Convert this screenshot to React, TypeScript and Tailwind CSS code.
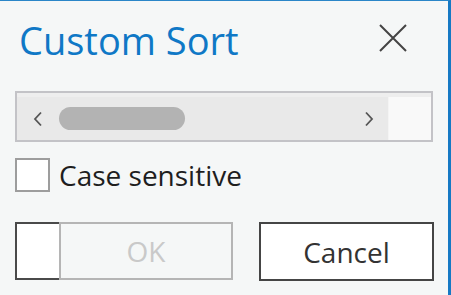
import React from 'react';

const font = { fontFamily: '"Open Sans", "Noto Sans", sans-serif' };

function Chevron({ dir }: { dir: 'left' | 'right' }) {
  return (
    <svg width="12" height="16" viewBox="0 0 12 16" className="shrink-0">
      <path
        d={dir === 'left' ? 'M9 1.5 L3 8 L9 14.5' : 'M3 1.5 L9 8 L3 14.5'}
        fill="none"
        stroke="#555"
        strokeWidth="1.8"
      />
    </svg>
  );
}

export default function App() {
  return (
    <div
      className="w-[451px] h-[295px] bg-[#f5f7f7] border-t border-t-[#2a86c8] border-r-[3px] border-r-[#1679c4] overflow-hidden pl-[15px] pr-[14px]"
      style={font}
    >
      {/* header */}
      <div className="flex items-start justify-between h-[60px]">
        <h1 className="mt-[20px] ml-[4px] text-[38px] leading-[38px] text-[#0f78c6] font-normal">
          Custom Sort
        </h1>
        <button className="mt-[23px] mr-[27px]">
          <svg width="28" height="28" viewBox="0 0 28 28">
            <path d="M1 1 L27 27 M27 1 L1 27" stroke="#444" strokeWidth="2" fill="none" />
          </svg>
        </button>
      </div>

      {/* scroll area */}
      <div className="mt-[30px] w-[418px] h-[51px] border-2 border-[#c3c3c7] flex flex-col">
        <div className="h-[4px] bg-[#eeeeee]" />
        <div className="flex flex-1">
          <div className="w-[371px] bg-[#e9e9e9] flex items-center pl-[15px] pr-[13px]">
            <Chevron dir="left" />
            <div className="ml-[15px] w-[126px] h-[23px] rounded-full bg-[#b3b3b3]" />
            <div className="flex-1" />
            <Chevron dir="right" />
          </div>
          <div className="w-px bg-[#f4f4f4]" />
          <div className="flex-1 bg-[#f9f9f9]" />
        </div>
      </div>

      {/* checkbox */}
      <label className="mt-[16px] flex items-center h-[34px]">
        <span className="w-[35px] h-[34px] border-2 border-[#9d9d9d] bg-white shrink-0" />
        <span className="ml-[9px] text-[28px] leading-[34px] text-[#1e1e1e]">Case sensitive</span>
      </label>

      {/* buttons */}
      <div className="mt-[30px] flex items-start gap-[26px]">
        <div className="flex w-[218px] h-[58px]">
          <div className="w-[44px] h-full bg-white border-2 border-r-0 border-[#4a4a4a]" />
          <button
            disabled
            className="flex-1 h-full border-2 border-[#b5b5b5] text-[28px] leading-none text-[#c9c9c9] flex items-center justify-center"
          >
            OK
          </button>
        </div>
        <button className="w-[175px] h-[59px] border-2 border-[#454545] bg-white text-[28px] leading-none text-[#333] flex items-center justify-center">
          Cancel
        </button>
      </div>
    </div>
  );
}
